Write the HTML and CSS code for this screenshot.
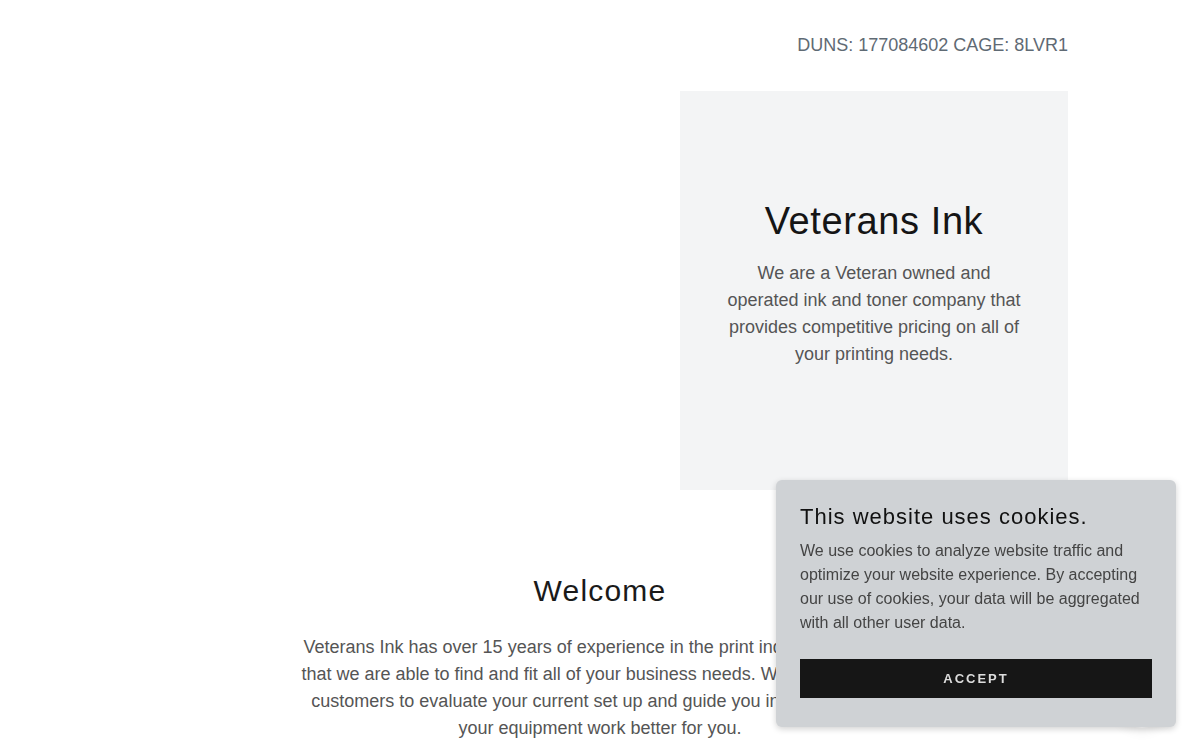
FILE: index.html
```html
<!DOCTYPE html>
<html lang="en">
<head>
<meta charset="utf-8">
<title>Veterans Ink</title>
<link rel="stylesheet" href="styles.css">
</head>
<body>
<div class="page">
  <header class="topbar">
    <p class="ids">DUNS: 177084602 CAGE: 8LVR1</p>
  </header>
  <section class="hero">
    <div class="hero-media"></div>
    <div class="hero-card">
      <h1 class="hero-title">Veterans Ink</h1>
      <p class="hero-text">We are a Veteran owned and operated ink and toner company that provides competitive pricing on all of your printing needs.</p>
    </div>
  </section>
  <section class="welcome">
    <h2 class="welcome-title">Welcome</h2>
    <p class="welcome-text">Veterans Ink has over 15 years of experience in the print industry, showing that we are able to find and fit all of your business needs. We work with our customers to evaluate your current set up and guide you in reconfiguring your equipment work better for you.</p>
  </section>
</div>
<div class="chat-ghost"></div>
<aside class="cookie">
  <h3 class="cookie-title">This website uses cookies.</h3>
  <p class="cookie-text">We use cookies to analyze website traffic and optimize your website experience. By accepting our use of cookies, your data will be aggregated with all other user data.</p>
  <button class="cookie-btn">ACCEPT</button>
</aside>
</body>
</html>
```
FILE: styles.css
```css
* { box-sizing: border-box; }
html, body { margin: 0; padding: 0; background: #fff; }
body {
  font-family: "Liberation Sans", Arial, sans-serif;
  overflow: hidden;
  height: 750px;
}
.page {
  width: 936px;
  margin: 0 auto;
}
.topbar {
  display: flex;
  justify-content: flex-end;
  padding-top: 33px;
  height: 91px;
}
.ids {
  margin: 0;
  font-size: 18px;
  line-height: 24px;
  color: #5f6a74;
}
.hero {
  display: flex;
  height: 399px;
}
.hero-media { flex: 1; }
.hero-card {
  width: 388px;
  background: #f3f4f5;
  display: flex;
  flex-direction: column;
  align-items: center;
  justify-content: center;
  padding: 0 46px 15px;
  text-align: center;
}
.hero-title {
  margin: 0 0 16px;
  font-weight: 400;
  font-size: 38px;
  line-height: 46px;
  letter-spacing: 0.6px;
  color: #151515;
}
.hero-text {
  margin: 0;
  font-size: 18px;
  line-height: 27px;
  color: #555;
}
.welcome {
  display: flex;
  flex-direction: column;
  align-items: center;
  text-align: center;
  padding-top: 82px;
}
.welcome-title {
  margin: 0 0 24px;
  font-weight: 400;
  font-size: 30px;
  line-height: 38px;
  letter-spacing: 1.2px;
  color: #1a1a1a;
}
.welcome-text {
  margin: 0;
  width: 600px;
  font-size: 18px;
  line-height: 27px;
  color: #555;
}
.chat-ghost {
  position: fixed;
  right: 30px;
  bottom: 22px;
  width: 56px;
  height: 56px;
  border-radius: 50%;
  box-shadow: 0 4px 12px rgba(0,0,0,0.06);
}
.cookie {
  position: fixed;
  right: 24px;
  bottom: 23px;
  width: 400px;
  height: 247px;
  background: #cfd2d5;
  border-radius: 6px;
  box-shadow: 0 2px 6px rgba(0,0,0,0.18);
  padding: 24px 24px;
}
.cookie-title {
  margin: 0 0 9px;
  font-weight: 400;
  font-size: 22px;
  line-height: 26px;
  letter-spacing: 1px;
  color: #111;
}
.cookie-text {
  margin: 0 0 24px;
  font-size: 16px;
  line-height: 24px;
  color: #444;
}
.cookie-btn {
  display: block;
  width: 100%;
  height: 39px;
  border: 0;
  background: #161616;
  color: #dcdcdc;
  font-family: "Liberation Sans", Arial, sans-serif;
  font-weight: 700;
  font-size: 13px;
  letter-spacing: 2px;
  cursor: pointer;
}
```
